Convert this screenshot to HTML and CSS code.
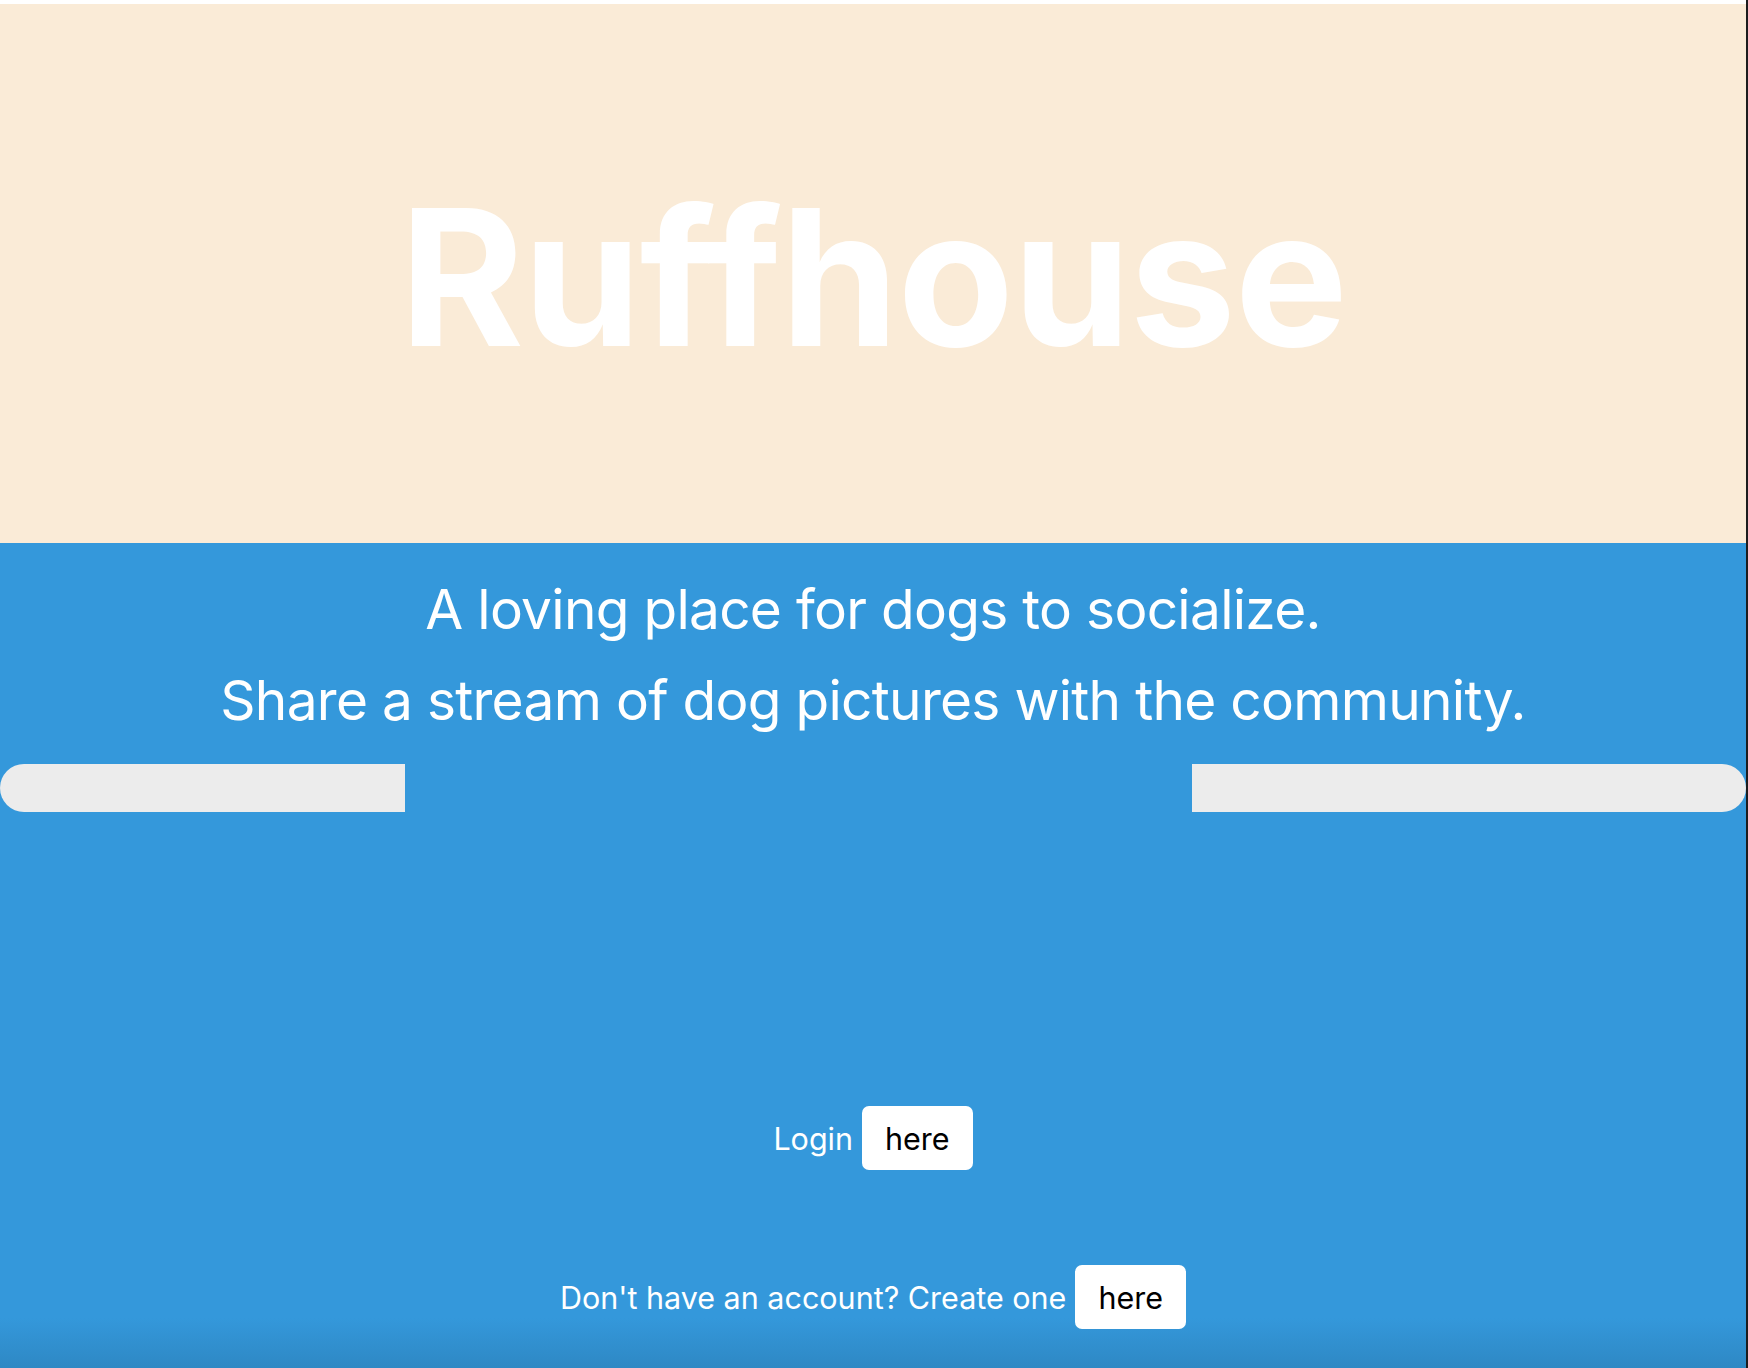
FILE: index.html
```html
<!DOCTYPE html>
<html lang="en">
<head>
<meta charset="utf-8">
<title>Ruffhouse</title>
<link rel="stylesheet" href="styles.css">
</head>
<body>
  <div class="page">
    <header class="hero">
      <h1 class="brand">Ruffhouse</h1>
    </header>
    <main class="content">
      <p class="tagline tagline-first">A loving place for dogs to socialize.</p>
      <p class="tagline">Share a stream of dog pictures with the community.</p>
      <div class="slider">
        <div class="track track-left"></div>
        <div class="track-gap"></div>
        <div class="track track-right"></div>
      </div>
      <div class="action action-login">
        <span class="action-label">Login</span>
        <a class="btn" href="#">here</a>
      </div>
      <div class="action action-signup">
        <span class="action-label">Don't have an account? Create one</span>
        <a class="btn" href="#">here</a>
      </div>
    </main>
  </div>
</body>
</html>
```
FILE: styles.css
```css
* { box-sizing: border-box; }

html, body {
  margin: 0;
  padding: 0;
}

body {
  background: #ffffff;
  padding-top: 4px;
  border-right: 2px solid #1c1c1e;
  font-family: Inter, "Noto Sans", "Liberation Sans", sans-serif;
  height: 1368px;
  overflow: hidden;
}

.page {
  display: flex;
  flex-direction: column;
  height: 1364px;
}

.hero {
  background: #faebd7;
  height: 539px;
  display: flex;
  align-items: center;
  justify-content: center;
}

.brand {
  margin: 0;
  color: #ffffff;
  font-weight: 700;
  font-size: 190px;
  letter-spacing: -0.007em;
  line-height: 1;
  padding-top: 7px;
}

.content {
  flex: 1;
  background: linear-gradient(to bottom, #3498db 0, #3498db calc(100% - 50px), #2e88c4 100%);
  display: flex;
  flex-direction: column;
  align-items: stretch;
  padding-top: 30px;
}

.tagline {
  margin: 0;
  color: #ffffff;
  font-size: 55px;
  line-height: 72px;
  text-align: center;
  font-weight: 400;
  letter-spacing: -0.013em;
}

.tagline-first {
  margin-bottom: 19px;
}

.slider {
  display: grid;
  grid-template-columns: 405px 787px 1fr;
  height: 48px;
  margin-top: 28px;
}

.track {
  background: #ececec;
}

.track-left {
  border-radius: 24px 0 0 24px;
}

.track-right {
  border-radius: 0 24px 24px 0;
}

.action {
  display: flex;
  align-items: center;
  justify-content: center;
  gap: 9px;
  color: #ffffff;
  font-size: 30.5px;
}

.action-login {
  margin-top: 294px;
}

.action-signup {
  margin-top: 95px;
}

.btn {
  display: inline-flex;
  align-items: center;
  justify-content: center;
  height: 64px;
  padding: 0 23px;
  background: #ffffff;
  color: #000000;
  border-radius: 7px;
  text-decoration: none;
  font-size: 30.5px;
}
```
